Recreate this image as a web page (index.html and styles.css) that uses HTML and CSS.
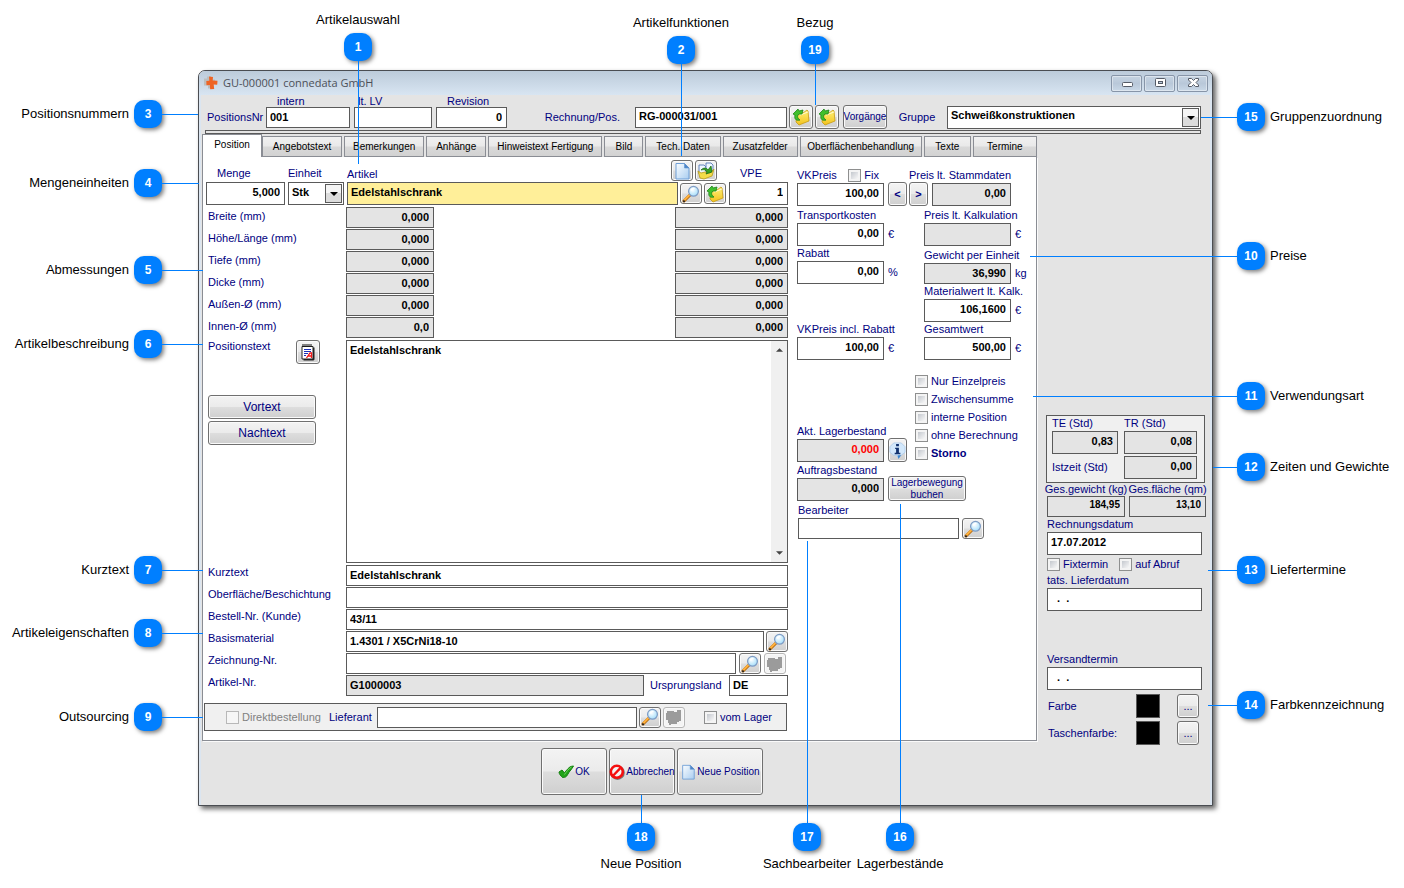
FILE: index.html
```html
<!DOCTYPE html>
<html lang="de">
<head>
<meta charset="utf-8">
<title>GU-000001 connedata GmbH</title>
<link rel="stylesheet" href="styles.css">
</head>
<body>
<svg class="defs" aria-hidden="true">
  <defs>
    <linearGradient id="gPage" x1="0" y1="0" x2="1" y2="1"><stop offset="0" stop-color="#fafdff"/><stop offset="1" stop-color="#a9cdf0"/></linearGradient>
    <linearGradient id="gFold" x1="0" y1="0" x2="0" y2="1"><stop offset="0" stop-color="#fff27a"/><stop offset="1" stop-color="#f2c21c"/></linearGradient>
    <radialGradient id="gLens" cx=".4" cy=".35" r=".7"><stop offset="0" stop-color="#ffffff"/><stop offset="1" stop-color="#9fdcfa"/></radialGradient>
    <symbol id="folder" viewBox="0 0 18 18">
      <path d="M5 6l4-2 2 1 4-3 1 1 1 10-10 4-3-3z" fill="url(#gFold)" stroke="#c79a12" stroke-width=".8"/>
      <path d="M8 7l8-3" stroke="#fffbd0" stroke-width="1"/>
      <path d="M1 6l5-5 1 2 4-1-1 4-3 0-1 1c-1 2 0 4 2 5-4 1-6-1-5-5z" fill="#3fbf2c" stroke="#1c8416" stroke-width=".8"/>
    </symbol>
    <symbol id="search" viewBox="0 0 18 18">
      <path d="M2 16l6-6" stroke="#b0630a" stroke-width="3" stroke-linecap="round"/>
      <path d="M2.500 15l5-5" stroke="#ffb03a" stroke-width="2" stroke-linecap="round"/>
      <circle cx="2" cy="16.200" r="1" fill="#222"/>
      <circle cx="11.500" cy="6.300" r="4.900" fill="url(#gLens)" stroke="#7f9cc4" stroke-width="1.300"/>
      <path d="M9 5.500c.5-1.500 2-2.200 3.500-1.800" stroke="#fff" stroke-width="1.200" fill="none"/>
    </symbol>
    <symbol id="page" viewBox="0 0 18 18">
      <path d="M3 1.500h8.500l4.500 4.500v11H3z" fill="url(#gPage)" stroke="#6f9fd6" stroke-width="1"/>
      <path d="M11.500 1.500l4.500 4.500h-4.500z" fill="#4f86c8" stroke="#5f93cf" stroke-width=".6"/>
    </symbol>
    <symbol id="copy" viewBox="0 0 18 18">
      <path d="M2 3h5l2 2v7H2z" fill="#eef6ff" stroke="#5478b8" stroke-width=".9"/>
      <path d="M9 1h5l2 2v6H9z" fill="#eef6ff" stroke="#5478b8" stroke-width=".9"/>
      <path d="M1 9l3 2 4-1 5 1 4-4-2 7-8 3-4-1z" fill="#f3dc4a" stroke="#b79a18" stroke-width=".8"/>
      <path d="M4 8c3-3 6-2 7 0l3-4 1 6-6 2 1-2c-1-2-3-3-6-2z" fill="#37a428" stroke="#14640e" stroke-width=".7"/>
    </symbol>
    <symbol id="gray" viewBox="0 0 18 18">
      <path d="M2 3h7v1h3V2h4v11h-2v1h-2v2H6v1H4v-2H3v-3H1V5h1z" fill="#9b9b9b"/>
    </symbol>
    <symbol id="info" viewBox="0 0 18 18">
      <path d="M5 1h8l4 4v6l-4 3h-2l-1 3-2-3H5L1 11V5z" fill="#d3e8fb" stroke="#a9c8e8" stroke-width=".8"/>
      <path d="M9 14l1 4 3-4z" fill="#3f87cf"/>
      <path d="M7.500 2h3v2.500h-3zM6.500 6h4v5.500h1.500v1.500H6V11.500h1.500V7.500h-1z" fill="#12336f"/>
    </symbol>
    <symbol id="note" viewBox="0 0 18 18">
      <path d="M14 4.500h1.500v12l-1 1H4.500V16H14z" fill="#222"/>
      <path d="M3 3.500h11v12.500H3z" fill="#fff" stroke="#222" stroke-width="1"/>
      <path d="M3.500 2.500h10" stroke="#111" stroke-width="3" stroke-dasharray="1 1"/>
      <path d="M5 6.500h7M5 8.500h7M5 10.500h4M5 12.500h2" stroke="#1c2fb8" stroke-width="1"/>
      <path d="M7.500 15l3.500-5h1.500v5M9 13h3" stroke="#f01818" stroke-width="1.300" fill="none"/>
    </symbol>
    <symbol id="check" viewBox="0 0 16 16">
      <path d="M1 8l3-2 2.500 3c2-3 4-5 6-6.500l3-.5c-1 2-2 3-3.500 5-2 2-2.500 5-4.500 6l-3 .5C3 12 1 10 1 8z" fill="#22a41a" stroke="#14800f" stroke-width="1"/>
      <path d="M6.500 10.500c2-3 4-5.500 7-7.500" stroke="#6fd65c" stroke-width="1" fill="none"/>
    </symbol>
    <symbol id="stop" viewBox="0 0 16 16">
      <circle cx="8.500" cy="8.700" r="6" fill="none" stroke="#777" stroke-width="2.600"/>
      <circle cx="7.800" cy="7.800" r="6" fill="#f4f4f4" stroke="#f40f0f" stroke-width="2.600"/>
      <path d="M4.300 11.500l7-7.300" stroke="#f40f0f" stroke-width="2.400"/>
    </symbol>
    <symbol id="cross" viewBox="0 0 16 16">
      <path d="M1 3.500h3V1.500h4v3h4v4H9v5H5v-3H1z" fill="#bdbdbd"/>
      <path d="M6 1.500l4 .5-.3 3.500 4.800.3-.3 3.900-3.500-.2.500 4.500-4 .3-.4-4.300-3.300.2-.2-4.200 3-.2z" fill="#ee6425"/>
    </symbol>
  </defs>
</svg>

<main class="figure">
  <section class="window">
    <header class="titlebar">
      <svg class="logo"><use href="#cross"/></svg>
      <h1 class="title">GU-000001 connedata GmbH</h1>
      <div class="controls">
        <button class="control" aria-label="Minimieren"><svg viewBox="0 0 16 14"><rect x="3.500" y="6.500" width="10" height="4" rx="1" fill="#fff" stroke="#555b66"/></svg></button>
        <button class="control" aria-label="Maximieren"><svg viewBox="0 0 16 14"><rect x="3.500" y="2.500" width="10" height="8" rx="1" fill="#fff" stroke="#555b66"/><rect x="6.500" y="5.500" width="4" height="2" fill="#b8c9dc" stroke="#555b66"/></svg></button>
        <button class="control" aria-label="Schließen"><svg viewBox="0 0 16 14"><path d="M3.500 2.500h3l2 2 2-2h3v1.500L11 6.500 13.500 9v1.500h-3l-2-2-2 2h-3V9L6 6.500 3.500 4z" fill="#fff" stroke="#555b66"/></svg></button>
      </div>
    </header>

    <div class="head">
      <span class="label head-label">PositionsNr</span>
      <div class="stack"><label class="label indent" for="intern">intern</label><input class="field" id="intern" value="001"></div>
      <div class="stack"><label class="label near" for="lv">lt. LV</label><input class="field" id="lv"></div>
      <div class="stack"><label class="label indent" for="rev">Revision</label><input class="field num" id="rev" value="0"></div>
      <label class="label head-label right" for="rechnung">Rechnung/Pos.</label>
      <div class="inline"><input class="field grow" id="rechnung" value="RG-000031/001"><button class="btn icon big" aria-label="Rechnung öffnen"><svg><use href="#folder"/></svg></button><button class="btn icon big" aria-label="Position öffnen"><svg><use href="#folder"/></svg></button></div>
      <button class="btn small big">Vorgänge</button>
      <label class="label head-label center" for="gruppe">Gruppe</label>
      <div class="combo"><select class="field tall" id="gruppe"><option>Schweißkonstruktionen</option></select><span class="arrow"></span></div>
    </div>
    <div class="rule"></div>

    <div class="work">
      <div class="tabarea">
        <div class="tabs" role="tablist">
          <button class="tab active" role="tab" aria-selected="true">Position</button>
          <button class="tab t80" role="tab">Angebotstext</button>
          <button class="tab t80" role="tab">Bemerkungen</button>
          <button class="tab t60" role="tab">Anhänge</button>
          <button class="tab t114" role="tab">Hinweistext Fertigung</button>
          <button class="tab t40" role="tab">Bild</button>
          <button class="tab t75" role="tab">Tech. Daten</button>
          <button class="tab t75" role="tab">Zusatzfelder</button>
          <button class="tab t122" role="tab">Oberflächenbehandlung</button>
          <button class="tab t47" role="tab">Texte</button>
          <button class="tab t64" role="tab">Termine</button>
        </div>

        <div class="panel">
          <div class="main">
            <div class="article">
              <div class="stack"><label class="label indent" for="menge">Menge</label><input class="field tall num" id="menge" value="5,000"></div>
              <div class="stack"><label class="label" for="einheit">Einheit</label><div class="combo"><select class="field tall" id="einheit"><option>Stk</option></select><span class="arrow"></span></div></div>
              <div class="stack">
                <div class="artlabel"><label class="label" for="artikel">Artikel</label><span class="inline"><button class="btn icon" aria-label="Neuer Artikel"><svg><use href="#page"/></svg></button><button class="btn icon" aria-label="Artikel kopieren"><svg><use href="#copy"/></svg></button></span></div>
                <div class="inline"><input class="field tall grow yellow" id="artikel" value="Edelstahlschrank"><button class="btn icon" aria-label="Artikel suchen"><svg><use href="#search"/></svg></button><button class="btn icon" aria-label="Artikel öffnen"><svg><use href="#folder"/></svg></button></div>
              </div>
              <div class="stack"><label class="label indent" for="vpe">VPE</label><input class="field tall num" id="vpe" value="1"></div>
            </div>

            <div class="dims">
              <label class="label" for="d1">Breite (mm)</label><input class="field num ro" id="d1" value="0,000" readonly><input class="field num ro last" aria-label="Breite Stammdaten" value="0,000" readonly>
              <label class="label" for="d2">Höhe/Länge (mm)</label><input class="field num ro" id="d2" value="0,000" readonly><input class="field num ro last" aria-label="Höhe Stammdaten" value="0,000" readonly>
              <label class="label" for="d3">Tiefe (mm)</label><input class="field num ro" id="d3" value="0,000" readonly><input class="field num ro last" aria-label="Tiefe Stammdaten" value="0,000" readonly>
              <label class="label" for="d4">Dicke (mm)</label><input class="field num ro" id="d4" value="0,000" readonly><input class="field num ro last" aria-label="Dicke Stammdaten" value="0,000" readonly>
              <label class="label" for="d5">Außen-Ø (mm)</label><input class="field num ro" id="d5" value="0,000" readonly><input class="field num ro last" aria-label="Außen-Ø Stammdaten" value="0,000" readonly>
              <label class="label" for="d6">Innen-Ø (mm)</label><input class="field num ro" id="d6" value="0,0" readonly><input class="field num ro last" aria-label="Innen-Ø Stammdaten" value="0,000" readonly>
            </div>

            <div class="postext">
              <div class="posside">
                <div class="poslabel"><label class="label" for="postext">Positionstext</label><button class="btn icon big" aria-label="Text bearbeiten"><svg><use href="#note"/></svg></button></div>
                <button class="btn wide">Vortext</button>
                <button class="btn wide">Nachtext</button>
              </div>
              <div class="memo">
                <textarea id="postext">Edelstahlschrank</textarea>
                <div class="scroll" aria-hidden="true">
                  <svg viewBox="0 0 8 4"><path d="M0 4l4-4 4 4z" fill="#444"/></svg>
                  <svg viewBox="0 0 8 4"><path d="M0 0l4 4 4-4z" fill="#444"/></svg>
                </div>
              </div>
            </div>

            <div class="props">
              <label class="label" for="kurz">Kurztext</label><input class="field" id="kurz" value="Edelstahlschrank">
              <label class="label" for="ober">Oberfläche/Beschichtung</label><input class="field" id="ober">
              <label class="label" for="bestell">Bestell-Nr. (Kunde)</label><input class="field" id="bestell" value="43/11">
              <label class="label" for="basis">Basismaterial</label><div class="inline"><input class="field grow" id="basis" value="1.4301 / X5CrNi18-10"><button class="btn icon" aria-label="Material suchen"><svg><use href="#search"/></svg></button></div>
              <label class="label" for="zeich">Zeichnung-Nr.</label><div class="inline drawing"><input class="field grow" id="zeich"><button class="btn icon" aria-label="Zeichnung suchen"><svg><use href="#search"/></svg></button><button class="btn icon off" aria-label="Zeichnung öffnen" disabled><svg><use href="#gray"/></svg></button></div>
              <label class="label" for="artnr">Artikel-Nr.</label><div class="origin"><input class="field ro" id="artnr" value="G1000003" readonly><label class="label" for="land">Ursprungsland</label><input class="field" id="land" value="DE"></div>
            </div>

            <div class="outsourcing">
              <label class="check off"><input type="checkbox" disabled>Direktbestellung</label>
              <label class="label" for="lieferant">Lieferant</label>
              <div class="inline"><input class="field grow" id="lieferant"><button class="btn icon" aria-label="Lieferant suchen"><svg><use href="#search"/></svg></button><button class="btn icon off" aria-label="Lieferant öffnen" disabled><svg><use href="#gray"/></svg></button></div>
              <label class="check"><input type="checkbox">vom Lager</label>
            </div>
          </div>

          <div class="values">
            <div class="sale">
              <div class="stack vk"><div class="vklabel"><label class="label" for="vk">VKPreis</label><label class="check"><input type="checkbox">Fix</label></div><input class="field tall num" id="vk" value="100,00"></div>
              <div class="pair"><button class="btn step">&lt;</button><button class="btn step">&gt;</button></div>
              <div class="stack toright"><label class="label" for="stamm">Preis lt. Stammdaten</label><input class="field tall num ro" id="stamm" value="0,00" readonly></div>
            </div>
            <div class="prices">
              <div class="pricecol">
                <label class="label" for="trans">Transportkosten</label><div class="unit"><input class="field tall num" id="trans" value="0,00">€</div>
                <label class="label" for="rabatt">Rabatt</label><div class="unit"><input class="field tall num" id="rabatt" value="0,00">%</div>
                <label class="label pushed" for="vkr">VKPreis incl. Rabatt</label><div class="unit"><input class="field tall num" id="vkr" value="100,00">€</div>
              </div>
              <div class="pricecol">
                <label class="label" for="kalk">Preis lt. Kalkulation</label><div class="unit"><input class="field tall num ro" id="kalk" readonly>€</div>
                <label class="label weight" for="gew">Gewicht per Einheit</label><div class="unit"><input class="field num ro" id="gew" value="36,990" readonly>kg</div>
                <label class="label" for="mat">Materialwert lt. Kalk.</label><div class="unit"><input class="field tall num" id="mat" value="106,1600">€</div>
                <label class="label" for="ges">Gesamtwert</label><div class="unit"><input class="field tall num" id="ges" value="500,00">€</div>
              </div>
            </div>
            <div class="usage">
              <div class="stack vk"><label class="label" for="akt">Akt. Lagerbestand</label><input class="field tall num ro red" id="akt" value="0,000" readonly></div>
              <button class="btn step" aria-label="Lagerinfo"><svg><use href="#info"/></svg></button>
              <div class="checks">
                <label class="check"><input type="checkbox">Nur Einzelpreis</label>
                <label class="check"><input type="checkbox">Zwischensumme</label>
                <label class="check"><input type="checkbox">interne Position</label>
                <label class="check"><input type="checkbox">ohne Berechnung</label>
                <label class="check strong"><input type="checkbox">Storno</label>
              </div>
            </div>
            <div class="stock">
              <div class="stack vk"><label class="label" for="auf">Auftragsbestand</label><input class="field tall num ro" id="auf" value="0,000" readonly></div>
              <button class="btn small move">Lagerbewegung buchen</button>
            </div>
            <div class="editor"><label class="label" for="bearb">Bearbeiter</label><div class="inline"><input class="field grow" id="bearb"><button class="btn icon" aria-label="Bearbeiter suchen"><svg><use href="#search"/></svg></button></div></div>
          </div>
        </div>
      </div>

      <aside class="side">
        <div class="times">
          <div class="stack"><label class="label" for="te">TE (Std)</label><input class="field tall num ro" id="te" value="0,83" readonly></div>
          <div class="stack"><label class="label" for="tr">TR (Std)</label><input class="field tall num ro" id="tr" value="0,08" readonly></div>
          <label class="label mid" for="ist">Istzeit (Std)</label><input class="field tall num ro" id="ist" value="0,00" readonly>
        </div>
        <div class="totals">
          <label class="label over" for="gg">Ges.gewicht (kg)</label><label class="label over" for="gf">Ges.fläche (qm)</label>
          <input class="field num ro tiny" id="gg" value="184,95" readonly><input class="field num ro tiny" id="gf" value="13,10" readonly>
        </div>
        <div class="dates">
          <label class="label" for="rd">Rechnungsdatum</label><input class="field tall" id="rd" value="17.07.2012">
          <div class="datechecks"><label class="check"><input type="checkbox">Fixtermin</label><label class="check"><input type="checkbox">auf Abruf</label></div>
          <label class="label" for="ld">tats. Lieferdatum</label><input class="field tall" id="ld" value="  .  .">
        </div>
        <div class="dates"><label class="label" for="vt">Versandtermin</label><input class="field tall" id="vt" value="  .  ."></div>
        <div class="colors">
          <span class="label">Farbe</span><span class="swatch"></span><button class="btn dots" aria-label="Farbe wählen">...</button>
          <span class="label">Taschenfarbe:</span><span class="swatch"></span><button class="btn dots" aria-label="Taschenfarbe wählen">...</button>
        </div>
      </aside>
    </div>

    <footer class="footer">
      <button class="btn small action"><svg><use href="#check"/></svg>OK</button>
      <button class="btn small action"><svg><use href="#stop"/></svg>Abbrechen</button>
      <button class="btn small action broad"><svg><use href="#page"/></svg>Neue Position</button>
    </footer>
  </section>

  <div class="callouts">
    <div class="note-left n3"><span class="name">Positionsnummern</span><b class="pin">3</b><i class="line"></i></div>
    <div class="note-left n4"><span class="name">Mengeneinheiten</span><b class="pin">4</b><i class="line"></i></div>
    <div class="note-left n5"><span class="name">Abmessungen</span><b class="pin">5</b><i class="line"></i></div>
    <div class="note-left n6"><span class="name">Artikelbeschreibung</span><b class="pin">6</b><i class="line"></i></div>
    <div class="note-left n7"><span class="name">Kurztext</span><b class="pin">7</b><i class="line"></i></div>
    <div class="note-left n8"><span class="name">Artikeleigenschaften</span><b class="pin">8</b><i class="line"></i></div>
    <div class="note-left n9"><span class="name">Outsourcing</span><b class="pin">9</b><i class="line"></i></div>
    <div class="note-right n15"><i class="line"></i><b class="pin">15</b><span class="name">Gruppenzuordnung</span></div>
    <div class="note-right n10"><i class="line"></i><b class="pin">10</b><span class="name">Preise</span></div>
    <div class="note-right n11"><i class="line"></i><b class="pin">11</b><span class="name">Verwendungsart</span></div>
    <div class="note-right n12"><i class="line"></i><b class="pin">12</b><span class="name">Zeiten und Gewichte</span></div>
    <div class="note-right n13"><i class="line"></i><b class="pin">13</b><span class="name">Liefertermine</span></div>
    <div class="note-right n14"><i class="line"></i><b class="pin">14</b><span class="name">Farbkennzeichnung</span></div>
    <div class="note-down n1"><span class="name">Artikelauswahl</span><b class="pin">1</b><i class="line"></i></div>
    <div class="note-down n2"><span class="name">Artikelfunktionen</span><b class="pin">2</b><i class="line"></i></div>
    <div class="note-down n19"><span class="name">Bezug</span><b class="pin">19</b><i class="line"></i></div>
    <div class="note-down n18"><i class="line"></i><b class="pin">18</b><span class="name">Neue Position</span></div>
    <div class="note-down n17"><i class="line"></i><b class="pin">17</b><span class="name">Sachbearbeiter</span></div>
    <div class="note-down n16"><i class="line"></i><b class="pin">16</b><span class="name">Lagerbestände</span></div>
  </div>
</main>
</body>
</html>
```
FILE: styles.css
```css
* { box-sizing: border-box; }
body { margin: 0; background: #fff; color: #000; font: 11px/15px "Liberation Sans", Arial, sans-serif; }
button, input, select, textarea { font: inherit; margin: 0; }
.defs { position: absolute; width: 0; height: 0; }
.figure { position: relative; padding: 70px 191px 82px 198px; }

/* window frame */
.window { border: 1px solid #4a4d52; border-radius: 7px 7px 0 0; background: #e4e4e4; box-shadow: 3px 3px 5px rgba(0,0,0,.6), inset 2px 0 #dbe5f0, inset -2px 0 #dbe5f0; }
.titlebar { display: flex; align-items: center; height: 24px; padding: 0 4px 0 4px; border-radius: 6px 6px 0 0; background: linear-gradient(#bccbda, #d8e5f2); }
.logo { width: 16px; height: 16px; }
.title { flex: 1; margin: 0 0 0 4px; font: 11px/24px "Open Sans", "Noto Sans", sans-serif; color: #4c5058; }
.controls { display: flex; gap: 2px; }
.control { display: flex; justify-content: center; width: 31px; height: 17px; padding: 0; border: 1px solid #8795a8; border-radius: 2px; background: linear-gradient(#c6d4e2, #b9c8d9 50%, #c9d8e7); box-shadow: inset 0 0 0 1px rgba(255,255,255,.4); }
.control svg { width: 16px; height: 14px; }

/* basic controls */
.label { color: #000080; white-space: nowrap; line-height: 15px; }
.center { text-align: center; }
.right { text-align: right; padding-right: 11px; }
.indent { padding-left: 11px; }
.near { padding-left: 4px; }
.field { display: block; width: 100%; min-width: 0; height: 21px; padding: 0 4px 2px 3px; border: 1px solid #5a5a5a; border-radius: 0; background: #fff; color: #000; font-weight: bold; outline: 0; }
.tall { height: 23px; padding-bottom: 3px; }
.num { text-align: right; }
.ro { background: #e4e4e4; }
.red { color: #f00; }
.yellow { background: #ffef99; }
.tiny { font-size: 10px; padding-bottom: 4px; }
.grow { flex: 1; }
.stack { display: flex; flex-direction: column; min-width: 0; }
.inline { display: flex; align-items: center; gap: 2px; min-width: 0; }
.combo { position: relative; }
.combo select { appearance: none; }
.arrow { position: absolute; top: 2px; right: 2px; display: grid; place-items: center; width: 17px; height: 19px; border: 1px solid #5a5a5a; background: linear-gradient(#f4f4f4 50%, #dcdcdc 50%); pointer-events: none; }
.arrow::after { content: ""; border: 4px solid transparent; border-top-color: #000; border-bottom-width: 0; }
.btn { display: flex; align-items: center; justify-content: center; flex: none; padding: 0; border: 1px solid #707070; border-radius: 3px; background: linear-gradient(#f3f3f3, #ebebeb 48%, #dddddd 52%, #cfcfcf); box-shadow: inset 0 0 0 1px #fafafa; color: #000080; }
.icon { width: 22px; height: 21px; }
.icon svg { width: 18px; height: 18px; }
.big { height: 24px; }
.icon.big { width: 24px; }
.small { font-size: 10px; line-height: 12px; }
.off { border-color: #b5b5b5; background: #f4f4f4; }
.step { width: 19px; height: 24px; font-weight: bold; }
.step svg { width: 17px; height: 17px; }
.check { display: flex; align-items: center; gap: 3px; color: #000080; white-space: nowrap; }
.check input { appearance: none; flex: none; width: 13px; height: 13px; border: 1px solid #8e8f8f; background: linear-gradient(135deg, #c4c8ce, #f8f8f8) content-box, #f4f4f4; padding: 2px; }
.check input:disabled { border-color: #b8b8b8; background: #f6f6f6; }
.check.off { color: #808080; background: none; }
.strong { font-weight: bold; }

/* header row */
.head { display: grid; grid-template-columns: 55px 84px 78px 71px 120px 204px 44px 52px minmax(120px, 1fr); column-gap: 4px; align-items: end; height: 35px; padding: 0 11px 1px 8px; }
.head .stack { padding-bottom: 1px; }
.head .stack .label { line-height: 12px; }
.head .combo .field { padding-bottom: 4px; }
.head .head-label { line-height: 24px; }
.rule { height: 4px; margin: 0 11px 0 6px; border: 1px solid #5a5a5a; }

/* tabs and panel */
.work { display: grid; grid-template-columns: minmax(0, 1fr) 175px; padding-left: 3px; align-items: start; }
.tabs { display: flex; align-items: flex-end; gap: 2px; }
.tab { flex: 1 1 80px; height: 21px; padding: 0 0 1px; border: 1px solid #8a8d94; background: linear-gradient(#f1f1f1, #e9e9e9 48%, #d9d9d9 52%, #d2d2d2); color: #000; font-size: 10px; white-space: nowrap; }
.tab.active { flex: 0 0 60px; height: 23px; margin-right: -2px; padding-bottom: 3px; border-bottom: 0; background: #fff; }
.t40 { flex-basis: 39px; }
.t47 { flex-basis: 47px; }
.t60 { flex-basis: 60px; }
.t64 { flex-basis: 64px; }
.t75 { flex-basis: 75px; }
.t114 { flex-basis: 114px; }
.t122 { flex-basis: 122px; }
.panel { display: grid; grid-template-columns: minmax(0, 1fr) 239px; gap: 9px; padding: 3px 0 9px; border: 1px solid #8a8d94; border-top: 0; background: #fff; box-shadow: 1px 1px #fafafa; }
.article { display: grid; grid-template-columns: 79px 56px minmax(0, 1fr) 59px; column-gap: 3px; padding-left: 3px; }
.article > .stack { justify-content: flex-end; }
.article .stack > .label { line-height: 18px; }
.artlabel { display: flex; justify-content: space-between; align-items: flex-end; height: 22px; padding-right: 9px; }
.artlabel .inline { align-self: flex-start; }
.dims { display: grid; grid-template-columns: 138px 88px minmax(0, 1fr) 113px; row-gap: 1px; margin-top: 2px; padding-left: 5px; }
.dims .label { line-height: 18px; }
.dims .last { grid-column: 4; }
.postext { display: grid; grid-template-columns: 138px minmax(0, 1fr); margin-top: 2px; padding-left: 5px; }
.posside { display: flex; flex-direction: column; gap: 2px; }
.poslabel { display: flex; justify-content: space-between; align-items: flex-start; width: 112px; height: 53px; }
.poslabel .label { line-height: 12px; }
.wide { width: 108px; height: 24px; font-size: 12px; }
.memo { display: flex; height: 223px; border: 1px solid #5a5a5a; }
.memo textarea { flex: 1; min-width: 0; padding: 2px 3px; border: 0; outline: 0; resize: none; font-weight: bold; color: #000; }
.scroll { display: flex; flex-direction: column; justify-content: space-between; align-items: center; width: 16px; padding: 7px 0; background: #f0f0f0; }
.scroll svg { width: 7px; height: 4px; }
.props { display: grid; grid-template-columns: 138px minmax(0, 1fr); row-gap: 1px; margin-top: 2px; padding-left: 5px; }
.drawing { gap: 3px; padding-right: 2px; }
.origin { display: grid; grid-template-columns: minmax(0, 1fr) 79px 59px; column-gap: 3px; align-items: center; }
.origin .label { padding-left: 3px; }
.outsourcing { display: grid; grid-template-columns: 103px 48px minmax(0, 1fr) 82px; align-items: center; height: 28px; margin: 7px 1px 0; padding-left: 21px; border: 1px solid #5a5a5a; background: #f0f0f0; }
.outsourcing > .inline { padding-right: 19px; }

/* prices and stock */
.values { padding-top: 8px; }
.sale { display: flex; align-items: flex-end; gap: 4px; }
.sale .field { width: 100%; }
.vk { width: 87px; }
.vklabel { display: flex; justify-content: space-between; padding-right: 5px; }
.pair { display: flex; gap: 2px; }
.toright { width: 79px; align-items: flex-end; }
.prices { display: grid; grid-template-columns: 127px 112px; margin-top: 2px; }
.pricecol { display: flex; flex-direction: column; }
.unit { display: flex; align-items: center; gap: 4px; color: #000080; }
.unit .field { flex: none; width: 87px; }
.weight { margin-top: 2px; }
.pushed { margin-top: auto; }
.usage { display: flex; align-items: flex-end; gap: 4px; margin-top: 12px; }
.checks { margin-left: 4px; }
.checks .check { height: 18px; }
.stock { display: flex; align-items: flex-end; gap: 4px; margin-top: 1px; }
.move { width: 78px; height: 25px; white-space: normal; }
.editor { display: flex; flex-direction: column; width: 187px; margin-top: 2px; padding-left: 1px; }
.editor .inline { gap: 3px; }

/* dates and colours */
.side { padding: 281px 9px 0 9px; }
.times { display: grid; grid-template-columns: 66px 73px; gap: 2px 6px; align-content: start; width: 159px; height: 68px; padding: 0 0 0 5px; border: 1px solid #5a5a5a; background: #f0f0f0; }
.mid { align-self: center; }
.times .field { flex: none; }
.totals { display: grid; grid-template-columns: 78px 77px; column-gap: 4px; margin-left: 1px; }
.over { justify-self: center; line-height: 13px; }
.dates { display: flex; flex-direction: column; width: 156px; padding-left: 1px; margin-bottom: 41px; }
.dates .field { white-space: pre; }
.datechecks { display: flex; gap: 11px; height: 18px; }
.colors { display: grid; grid-template-columns: 88px 41px 22px; row-gap: 3px; align-items: center; margin-top: -37px; padding-left: 2px; }
.swatch { width: 24px; height: 24px; border: 1px solid #5a5a5a; background: #000; }
.dots { width: 22px; height: 24px; }

/* footer */
.footer { display: flex; gap: 2px; padding: 3px 0 10px 342px; }
.action { width: 66px; height: 47px; gap: 1px; }
.action svg { flex: none; width: 16px; height: 16px; }
.broad { width: 86px; }

/* numbered callouts lying over the window */
.callouts { position: absolute; inset: 0; pointer-events: none; font-size: 13px; line-height: 16px; }
.pin { display: grid; place-items: center; flex: none; width: 28px; height: 28px; border-radius: 10px; background: #007fff; color: #fff; font-size: 12px; box-shadow: 2px 2px 4px rgba(0,0,0,.5); }
.name { white-space: nowrap; }
.line { flex: 1; background: #007fff; }
.note-left, .note-right { position: absolute; display: flex; align-items: center; }
.note-left .line, .note-right .line { height: 1px; }
.note-left { left: 0; width: 203px; }
.note-left .name { width: 129px; margin-right: 5px; text-align: right; }
.note-right { right: 0; width: 196px; }
.note-right .name { width: 134px; margin-left: 5px; }
.note-down { position: absolute; display: flex; flex-direction: column; align-items: center; width: 120px; }
.note-down .line { width: 1px; }
.note-down .name:first-child { margin-bottom: 5px; }
.note-down .name:last-child { margin-top: 5px; }
.n3 { top: 100px; width: 198px; }
.n4 { top: 169px; width: 199px; }
.n5 { top: 256px; }
.n6 { top: 330px; }
.n7 { top: 556px; }
.n8 { top: 619px; }
.n9 { top: 703px; }
.n15 { top: 103px; width: 203px; }
.n10 { top: 242px; width: 374px; }
.n11 { top: 382px; width: 371px; }
.n12 { top: 453px; width: 191px; }
.n13 { top: 556px; }
.n14 { top: 691px; }
.n1 { top: 12px; left: 298px; height: 152px; }
.n2 { top: 15px; left: 621px; height: 141px; }
.n19 { top: 15px; left: 755px; height: 90px; }
.n18 { top: 795px; left: 581px; height: 77px; }
.n17 { top: 541px; left: 747px; height: 331px; }
.n16 { top: 504px; left: 840px; height: 368px; }
```
